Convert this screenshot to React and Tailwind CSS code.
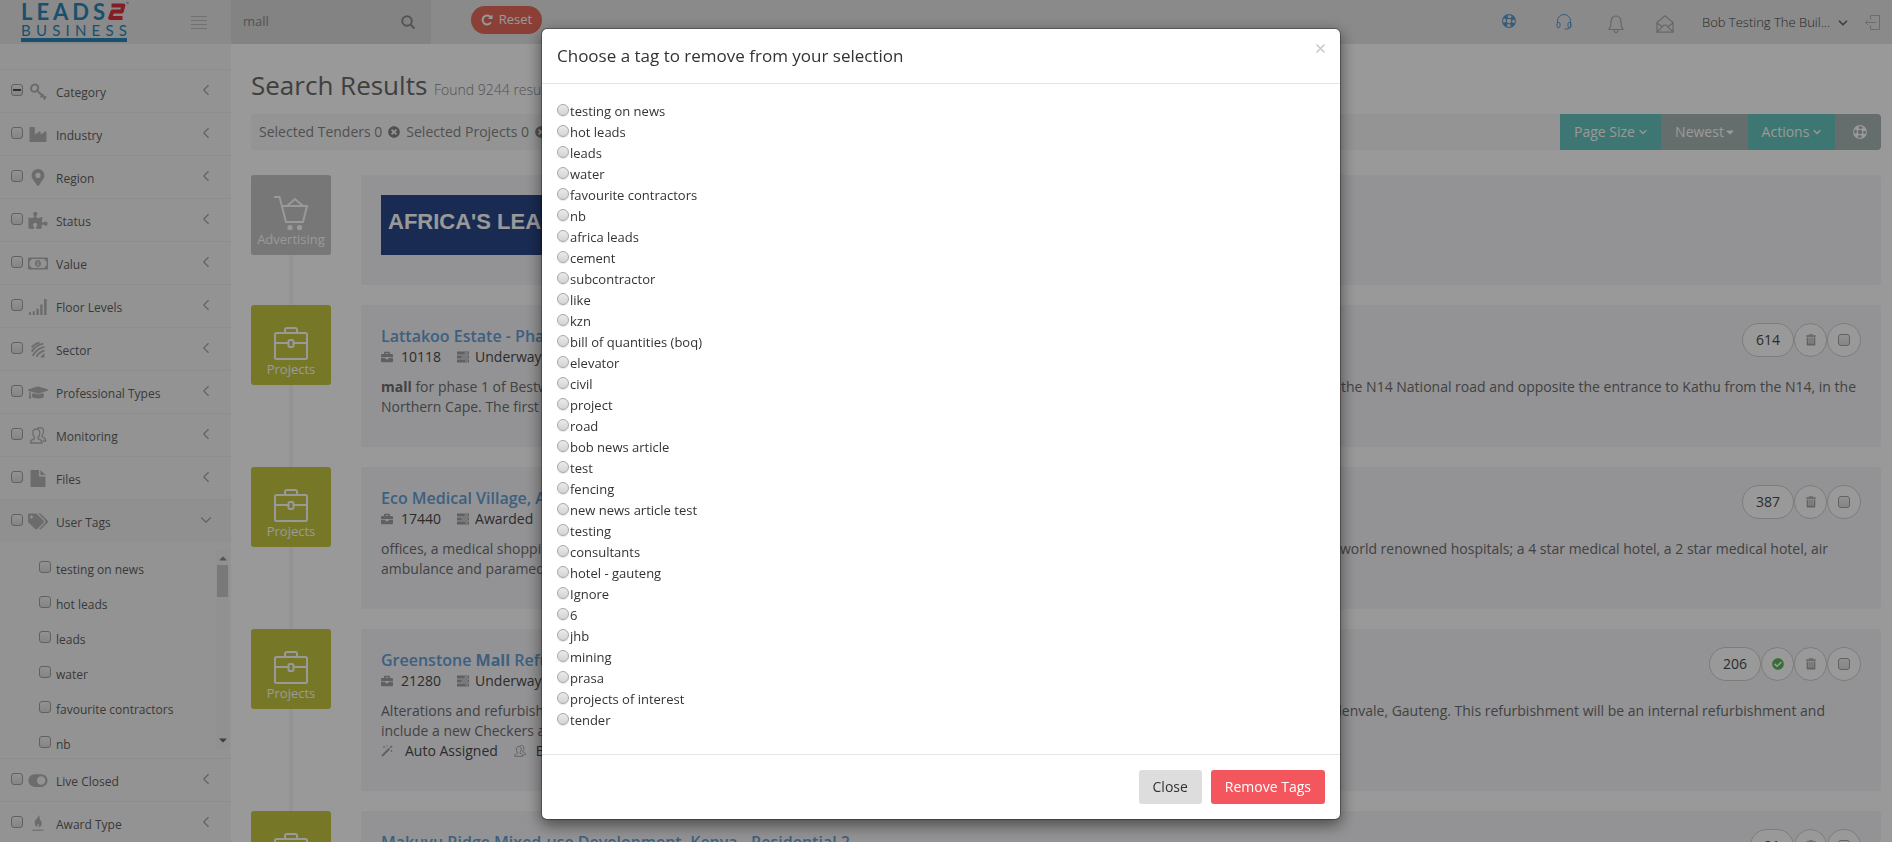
import React, { useState } from 'react';
import {
  FaIndustry, FaMapMarkerAlt, FaPuzzlePiece, FaRegMoneyBillAlt, FaGraduationCap,
  FaTags, FaToggleOn, FaTimesCircle, FaBriefcase, FaCaretDown, FaCheckCircle
} from 'react-icons/fa';
import { ChevronLeft, ChevronDown } from 'lucide-react';

// Icons that the icon sets lack
function KeyIcon({ className }) {
  return (
    <svg viewBox="0 0 16 16" className={className} fill="none" stroke="currentColor" strokeWidth="2">
      <ellipse cx="4.800" cy="4.800" rx="3.600" ry="3.200" transform="rotate(-40 4.800 4.800)" />
      <path d="M7.500 7.500L14.500 14M10.500 13.500L13 10.500M13.500 15.500L15.500 12.500" />
    </svg>
  );
}

function BarsIcon({ className }) {
  return (
    <svg viewBox="0 0 17 16" className={className} fill="currentColor">
      <path d="M0 13.500h2V16H0zM3.500 12.500h2V16h-2zM7 10h2.200v6H7zM10.600 6h2.200v10h-2.200zM14.200 1h2.400v15h-2.400z" />
    </svg>
  );
}

function FileIcon({ className }) {
  return (
    <svg viewBox="0 0 14 16" className={className} fill="currentColor">
      <path d="M0 0h8v6h6v10H0z" />
      <path d="M9.300 0L14 4.700H9.300z" />
    </svg>
  );
}

function FeedIcon({ className }) {
  return (
    <svg viewBox="0 0 16 16" className={className} fill="none" stroke="currentColor" strokeWidth="1.800">
      <path d="M2 6C4 3.500 6.500 2 9.500 1.500M2 10C4.500 6 8 3.500 13 2.500M3 14C5.500 9.500 9 6.500 14 5.500M6.500 15C8 12 10.500 10 14 9" />
      <path d="M10 15.500L14 11V15.500Z" fill="currentColor" stroke="none" />
    </svg>
  );
}

function UsersIcon({ className }) {
  return (
    <svg viewBox="0 0 17 17" className={className} fill="none" stroke="currentColor" strokeWidth="1.300">
      <path d="M1 16c0-3 1.500-3.300 4-4.200v-1.500C4 9.300 3.300 7.800 3.300 5.800 3.300 3.500 4.600 2 6.800 2s3.500 1.500 3.500 3.800c0 2-.7 3.500-1.700 4.500v1.500c2.500.9 4 1.200 4 4.200z" />
      <path d="M8 1.500C8.600.8 9.500.6 10.500.6c2.200 0 3.600 1.400 3.600 3.700 0 1.800-.6 3.300-1.600 4.300v1.200c2 .8 3.700 1.200 3.700 4.200h-2.700" />
    </svg>
  );
}

function AwardIcon({ className }) {
  return (
    <svg viewBox="0 0 16 18" className={className} fill="currentColor">
      <path d="M8.500 0c.3 3-4 4.500-4 8.500 0 2.500 1.500 4 3 4.600-.6-1.800 0-3 .8-4 .4 1.300 1 2.300.4 4C11 12.500 12 11 12 9c0-1.700-.8-2.500-1-4-.4.400-.6 1-.6 1.600C9.600 5 10.500 2 8.500 0z" />
      <rect x="2" y="15.500" width="12" height="1.200" />
    </svg>
  );
}

function LifeRing({ className }) {
  return (
    <svg viewBox="0 0 14 14" className={className} fill="none" stroke="currentColor">
      <circle cx="7" cy="7" r="6.400" strokeWidth="1.100" />
      <circle cx="7" cy="7" r="2.800" strokeWidth="1.100" />
      <circle cx="7" cy="7" r="4.600" strokeWidth="4" strokeDasharray="3.600 3.625" strokeDashoffset="-1.800" />
    </svg>
  );
}

function TasksIcon({ className }) {
  return (
    <svg viewBox="0 0 12 12" className={className} fill="currentColor">
      <path fillRule="evenodd" d="M0 .5h12v3H0zM7.500 1.500v1H11v-1zM0 4.500h12v3H0zM4.500 5.500v1H11v-1zM0 8.500h12v3H0zM8.500 9.500v1H11v-1z" />
    </svg>
  );
}

function WandIcon({ className }) {
  return (
    <svg viewBox="0 0 12 12" className={className} fill="none" stroke="currentColor">
      <path d="M1 11L8.500 3.500" strokeWidth="2" />
      <path d="M9.200 2.800L11 1" strokeWidth="1.600" />
      <path d="M3 1v2M2 2h2M6 .5v1.500M10.500 5v2M9.500 6h2" strokeWidth="0.700" />
    </svg>
  );
}

function BriefcaseOutline() {
  return (
    <svg viewBox="0 0 36 36" className="h-9 w-9" fill="none" stroke="currentColor" strokeWidth="2">
      <rect x="2" y="8" width="32" height="26" rx="1.500" />
      <path d="M12 8V5a2 2 0 0 1 2-2h8a2 2 0 0 1 2 2v3M2 18h13.500M20.500 18H34" />
      <rect x="15.500" y="15" width="5" height="7" rx="1.500" />
    </svg>
  );
}

function CartOutline() {
  return (
    <svg viewBox="0 0 36 36" className="h-9 w-9" fill="none" stroke="currentColor" strokeWidth="2">
      <path d="M1 2h5.500l6.500 25h17l4-16H9.500" />
      <path d="M14 11l8-7 8 7" />
      <circle cx="17" cy="32.500" r="2.600" fill="currentColor" stroke="none" />
      <circle cx="26.500" cy="32.500" r="2.600" fill="currentColor" stroke="none" />
    </svg>
  );
}

function TrashIcon() {
  return (
    <svg viewBox="0 0 12 14" className="h-3 w-3 text-[#a5a5a5]" fill="none" stroke="currentColor">
      <path d="M4 2V.8h4V2" />
      <rect x="0.500" y="1.500" width="11" height="1.800" fill="currentColor" stroke="none" />
      <path d="M2 4v8.500h8V4" strokeWidth="2" />
      <path d="M4.800 4v8M7.200 4v8" strokeWidth="1.300" />
    </svg>
  );
}

const filters = [
  { name: 'Category', icon: KeyIcon, partial: true },
  { name: 'Industry', icon: FaIndustry },
  { name: 'Region', icon: FaMapMarkerAlt },
  { name: 'Status', icon: FaPuzzlePiece },
  { name: 'Value', icon: FaRegMoneyBillAlt },
  { name: 'Floor Levels', icon: BarsIcon },
  { name: 'Sector', icon: FeedIcon },
  { name: 'Professional Types', icon: FaGraduationCap },
  { name: 'Monitoring', icon: UsersIcon },
  { name: 'Files', icon: FileIcon },
  { name: 'User Tags', icon: FaTags, open: true },
  { name: 'Live Closed', icon: FaToggleOn },
  { name: 'Award Type', icon: AwardIcon }
];

const tags = [
  'testing on news', 'hot leads', 'leads', 'water', 'favourite contractors', 'nb', 'africa leads',
  'cement', 'subcontractor', 'like', 'kzn', 'bill of quantities (boq)', 'elevator', 'civil',
  'project', 'road', 'bob news article', 'test', 'fencing', 'new news article test', 'testing',
  'consultants', 'hotel - gauteng', 'Ignore', '6', 'jhb', 'mining', 'prasa',
  'projects of interest', 'tender'
];

const projects = [
  {
    id: '10118',
    title: 'Lattakoo Estate - Phase 1',
    status: 'Underway',
    count: 614,
    lines: [
      [<><b className="font-bold">mall</b> for phase 1 of Bestwood</>, 'the N14 National road and opposite the entrance to Kathu from the N14, in the', 'mr-[5px]'],
      ['Northern Cape. The first phase', '', '']
    ]
  },
  {
    id: '17440',
    title: 'Eco Medical Village, A',
    status: 'Awarded',
    count: 387,
    lines: [
      ['offices, a medical shopping', 'world renowned hospitals; a 4 star medical hotel, a 2 star medical hotel, air', 'mr-[33px]'],
      ['ambulance and paramedic', '', '']
    ]
  },
  {
    id: '21280',
    title: <>Greenstone <b className="font-bold">Mall</b> Refurb</>,
    status: 'Underway',
    count: 206,
    checked: true,
    assigned: true,
    lines: [
      ['Alterations and refurbishment', 'Edenvale, Gauteng. This refurbishment will be an internal refurbishment and', 'mr-9'],
      ['include a new Checkers and', '', '']
    ]
  },
  {
    id: '24410',
    title: 'Makuyu Ridge Mixed-use Development, Kenya - Residential 2',
    status: 'Underway',
    count: 21,
    lines: []
  }
];

const boxClass =
  'h-3 w-3 shrink-0 appearance-none rounded-[3px] border border-[#a2a2a2] bg-linear-to-b from-[#f4f4f4] to-[#dedede]';

function Logo() {
  return (
    <a href="#home" aria-label="Leads 2 Business" className="mb-px ml-[21px] block w-[108px] font-['Lato',sans-serif] text-[#2b86b8]">
      <div className="flex h-[22px]">
        <div className="flex w-[84px] justify-between text-[22px] leading-[22px] font-bold">
          {'LEADS'.split('').map((letter) => <span key={letter}>{letter}</span>)}
        </div>
        <svg viewBox="0 0 24 22" className="h-[22px] w-6">
          <path d="M6.500 4.500H18.500L16.800 10.500H7.500L5 17H17.500" fill="none" stroke="#e0303c" strokeWidth="3.800" strokeLinejoin="round" />
          <circle cx="22.500" cy="2" r="0.900" fill="none" stroke="currentColor" strokeWidth="0.500" />
        </svg>
      </div>
      <div className="flex w-[106px] justify-between text-[15px] leading-[14px]">
        {'BUSINESS'.split('').map((letter, index) => <span key={index}>{letter}</span>)}
      </div>
      <div className="mt-px h-1 w-[106px] bg-[#2b86b8]" />
    </a>
  );
}

function TopBar() {
  const [query, setQuery] = useState('mall');

  return (
    <header className="flex h-11 bg-[#e6e6e6]">
      <div className="flex w-[231px] shrink-0 items-center justify-between pr-6">
        <Logo />
        <button aria-label="Toggle menu" className="flex w-4 flex-col gap-[3px]">
          <span className="h-px bg-[#bdbdbd]" />
          <span className="h-px bg-[#bdbdbd]" />
          <span className="h-px bg-[#bdbdbd]" />
          <span className="h-px bg-[#bdbdbd]" />
        </button>
      </div>
      <form className="flex w-[200px] items-center bg-[#dadada] pr-4 pl-3">
        <input
          aria-label="Search"
          value={query}
          onChange={(e) => setQuery(e.target.value)}
          className="min-w-0 flex-1 text-[13px] text-[#8a8a8a] outline-none"
        />
        <button type="button" aria-label="Search" className="text-[#8c8c8c]">
          <svg viewBox="0 0 14 14" className="h-3.5 w-3.5" fill="none" stroke="currentColor" strokeWidth="2">
            <circle cx="6" cy="6" r="4.800" />
            <path d="M9.500 9.500L13.500 13.500" />
          </svg>
        </button>
      </form>
      <button className="mt-1.5 ml-10 flex h-7 w-[71px] items-center justify-center gap-1.5 rounded-full bg-[#e66b5b] text-[13px] text-white">
        <svg viewBox="0 0 12 12" className="h-3 w-3" fill="none" stroke="currentColor" strokeWidth="2">
          <path d="M9.800 8.500A4.500 4.500 0 1 1 9.500 3" />
          <path d="M11.500 0.500V5H7Z" fill="currentColor" stroke="none" />
        </svg>
        Reset
      </button>
      <div className="ml-auto flex items-center pr-3">
        <LifeRing className="mr-10 mb-0.5 h-3.5 w-3.5 text-[#5c9bd1]" />
        <svg viewBox="0 0 16 16" className="mr-9 h-4 w-4 text-[#5c9bd1]" fill="none" stroke="currentColor">
          <path d="M1.500 9V7a6.500 6.500 0 0 1 13 0v5c0 2-1.500 3-4 3H8.500" />
          <rect x="1" y="8.500" width="3" height="5" rx="1" />
          <rect x="12" y="8.500" width="3" height="5" rx="1" />
        </svg>
        <svg viewBox="0 0 16 18" className="mt-1 mr-8 h-[18px] w-4 text-[#ababab]" fill="none" stroke="currentColor" strokeWidth="1.200">
          <path d="M1 14.500C3 12 3 10 3 7c0-4 2-6 5-6s5 2 5 6c0 3 0 5 2 7.500z" />
          <path d="M6 15c0 1.500.8 2.500 2 2.500s2-1 2-2.500" />
        </svg>
        <svg viewBox="0 0 18 18" className="mt-1 mr-7 h-[18px] w-[18px] text-[#ababab]" fill="none" stroke="currentColor" strokeWidth="1.200">
          <path d="M1 7.500L9 .8l8 6.700v9.700H1z" />
          <path d="M1 8l5 3.500M17 8l-5 3.500M1 17l7-7h2l7 7" />
        </svg>
        <a href="#account" className="mt-0.5 mr-[15px] flex items-center gap-1.5 text-[13px] font-light text-[#444]">
          Bob Testing The Buil...
          <ChevronDown className="h-3.5 w-3.5 text-[#6a6a6a]" strokeWidth={3} />
        </a>
        <button aria-label="Log out" className="text-[#b4b4b4]">
          <svg viewBox="0 0 15 15" className="h-[15px] w-[15px]" fill="none" stroke="currentColor">
            <path d="M5.500 4.500v-4h9v14h-9v-4M10.500 7.500h-10M3 5L.5 7.500L3 10" />
          </svg>
        </button>
      </div>
    </header>
  );
}

function Sidebar() {
  return (
    <aside className="w-[231px] shrink-0 bg-[#f6f6f6] pt-[25px]">
      {filters.map((filter) => {
        const Icon = filter.icon;
        const Arrow = filter.open ? ChevronDown : ChevronLeft;

        return (
          <div key={filter.name} className="border-t border-[#ebebeb]">
            <div className={`flex h-[42px] items-center pr-4 pl-[11px] ${filter.open ? 'bg-[#f0f0f0]' : ''}`}>
              <div className="relative mb-0.5 flex">
                <input type="checkbox" aria-label={`Select ${filter.name}`} className={boxClass} />
                {filter.partial && <span className="pointer-events-none absolute top-[5px] left-0.5 h-0.5 w-2 bg-[#505050]" />}
              </div>
              <Icon className="ml-[5px] h-[17px] w-5 text-[#b4b4b4]" />
              <a href="#filter" className="mt-1 ml-2 flex-1 text-xs text-[#5f5f5f]">{filter.name}</a>
              <Arrow className="mb-0.5 h-[18px] w-[18px] text-[#a2a2a2]" strokeWidth={1.5} />
            </div>
            {filter.open && (
              <div className="flex h-[216px] items-start">
                <ul className="h-[208px] flex-1 overflow-hidden pt-2 pl-[39px]">
                  {tags.slice(0, 6).map((tag) => (
                    <li key={tag} className="flex h-[35px] items-center">
                      <label className="flex items-center gap-[5px] text-xs text-[#5f5f5f]">
                        <input type="checkbox" className={`${boxClass} mb-0.5`} />
                        <span className="mt-1">{tag}</span>
                      </label>
                    </li>
                  ))}
                </ul>
                <div className="mt-2 mr-0.5 flex h-[200px] w-[13px] flex-col items-center bg-[#f2f2f2] pt-[3px] pb-1 text-[#6a6a6a]">
                  <FaCaretDown className="h-3 w-3 rotate-180 text-[#8a8a8a]" />
                  <div className="h-8 w-[11px] bg-[#cacaca]" />
                  <FaCaretDown className="mt-auto h-3 w-3" />
                </div>
              </div>
            )}
          </div>
        );
      })}
    </aside>
  );
}

function Tile({ ad }) {
  return (
    <div className={`relative mr-[30px] flex h-20 w-20 shrink-0 flex-col items-center justify-end rounded-[3px] pb-2 text-[13px] text-white ${ad ? 'bg-[#c6c6c6]' : 'bg-[#c5c843]'}`}>
      {ad ? <CartOutline /> : <BriefcaseOutline />}
      <span className="leading-4">{ad ? 'Advertising' : 'Projects'}</span>
    </div>
  );
}

function ProjectCard({ project }) {
  const circle = 'flex h-[34px] w-[33px] items-center justify-center rounded-full border border-[#cfcfcf] bg-white';

  return (
    <div className="flex">
      <Tile />
      <article className={`relative min-w-0 flex-1 rounded-[3px] bg-[#f5f5f8] p-5 text-sm leading-5 text-[#6e6e6e] ${project.assigned ? 'h-[162px]' : 'h-[142px]'}`}>
        <h2 className="text-base leading-[22px] font-semibold">
          <a href="#project" className="text-[#66a0d4]">{project.title}</a>
        </h2>
        <div className="flex items-center text-[#4a4a4a]">
          <FaBriefcase className="mr-2 h-3 w-3 text-[#a0a0a0]" />
          {project.id}
          <TasksIcon className="mr-1.5 ml-4 h-3 w-3 text-[#a0a0a0]" />
          {project.status}
        </div>
        <div className="mt-2.5">
          {project.lines.map(([start, end, space], index) => (
            <p key={index} className="flex justify-between whitespace-nowrap">
              <span>{start}</span>
              <span className={space}>{end}</span>
            </p>
          ))}
        </div>
        {project.assigned && (
          <div className="flex items-center text-[#4a4a4a]">
            <WandIcon className="mr-3 h-3 w-3 text-[#a0a0a0]" />
            Auto Assigned
            <UsersIcon className="mr-2.5 ml-4 h-3 w-3 text-[#a0a0a0]" />
            Bob
          </div>
        )}
        <div className="absolute top-[18px] right-5 flex">
          <span className="flex h-[34px] items-center rounded-full border border-[#cfcfcf] bg-white px-[13px] text-[#4a4a4a]">{project.count}</span>
          {project.checked && (
            <span className={circle}><FaCheckCircle className="h-3 w-3 text-[#5cb85c]" /></span>
          )}
          <button aria-label="Delete" className={circle}><TrashIcon /></button>
          <span className={`${circle} min-w-[34px]`}>
            <input type="checkbox" aria-label={`Select project ${project.id}`} className={boxClass} />
          </span>
        </div>
      </article>
    </div>
  );
}

function Results() {
  return (
    <main className="min-w-0 flex-1 overflow-hidden pr-[11px] pl-5">
      <h1 className="mt-[23px] text-[26px] leading-9 text-[#6a6a6a]">
        Search Results <small className="text-sm font-light text-[#8a8a8a]">Found 9244 results</small>
      </h1>
      <div className="mt-[11px] flex h-9 items-center rounded-[3px] bg-[#f7f7f7] pl-2 text-sm text-[#858585]">
        Selected Tenders 0 <FaTimesCircle className="mx-1.5 h-3 w-3" />
        Selected Projects 0 <FaTimesCircle className="mx-1.5 h-3 w-3" />
        <div className="ml-auto flex h-full text-white">
          <button className="flex w-[101px] items-center justify-center gap-0.5 bg-[#67c5be] pl-0.5">Page Size <ChevronDown className="h-3.5 w-3" strokeWidth={2.5} /></button>
          <button className="flex w-[87px] items-center justify-center bg-[#a9b7b5] pl-0.5">Newest <FaCaretDown className="h-3 w-3" /></button>
          <button className="flex w-[87px] items-center justify-center gap-0.5 bg-[#67c5be] pl-0.5">Actions <ChevronDown className="h-3.5 w-3" strokeWidth={2.5} /></button>
          <button aria-label="Help" className="flex w-[46px] items-center justify-center rounded-r bg-[#a9b7b5] pl-1"><LifeRing className="h-3.5 w-3.5" /></button>
        </div>
      </div>
      <div className="relative mt-[25px] flex flex-col gap-5">
        <div className="absolute inset-y-0 left-[38px] w-1 bg-[#f5f5f5]" />
        <div className="flex">
          <Tile ad />
          <div className="h-[110px] flex-1 rounded-[3px] bg-[#f5f5f8] p-5">
            <a href="#africa" className="flex h-[60px] w-[468px] items-center bg-[#2b4989] pb-1.5 pl-[7px] font-['Liberation_Sans',sans-serif] text-[22px] leading-7 font-bold whitespace-nowrap text-white">
              AFRICA'S LEADING
            </a>
          </div>
        </div>
        {projects.map((project) => (
          <ProjectCard key={project.id} project={project} />
        ))}
      </div>
    </main>
  );
}

function RemoveTagModal() {
  const [selected, setSelected] = useState('');

  return (
    <div className="fixed inset-0 flex items-start justify-center bg-black/40 pt-7 pr-2.5">
      <div role="dialog" aria-labelledby="modal-title" className="w-[800px] rounded-md border border-black/30 bg-white bg-clip-padding text-[#333] shadow-[0_5px_15px_rgba(0,0,0,0.5)]">
        <div className="flex h-[55px] items-start justify-between border-b border-[#e5e5e5] px-[15px] pt-[15px]">
          <h4 id="modal-title" className="text-[17px] leading-6">Choose a tag to remove from your selection</h4>
          <button aria-label="Close dialog" className="text-[#c8c8c8]">
            <svg viewBox="0 0 9 9" className="h-[9px] w-[9px]" fill="none" stroke="currentColor" strokeWidth="1.500">
              <path d="M0.500 0.500l8 8M8.500 0.500l-8 8" />
            </svg>
          </button>
        </div>
        <div className="px-[15px] pt-[17px] pb-[23px]">
          {tags.map((tag) => (
            <label key={tag} className="flex h-[21px] items-center text-[13px]">
              <input
                type="radio"
                name="tag"
                checked={selected === tag}
                onChange={() => setSelected(tag)}
                className="mr-px mb-1 h-3 w-3 appearance-none rounded-full border border-[#a8a8a8] bg-linear-to-b from-[#eaeaea] to-[#d4d4d4] shadow-[0_1px_1px_rgba(0,0,0,0.1)]"
              />
              {tag}
            </label>
          ))}
        </div>
        <div className="flex justify-end gap-[9px] border-t border-[#e5e5e5] p-[15px] text-sm">
          <button className="h-[34px] rounded-[3px] bg-[#ddd] px-3.5">Close</button>
          <button className="h-[34px] rounded-[3px] bg-[#f3565d] px-3.5 text-white">Remove Tags</button>
        </div>
      </div>
    </div>
  );
}

function App() {
  return (
    <div className="h-screen overflow-hidden bg-white font-['Open_Sans',sans-serif]">
      <TopBar />
      <div className="flex">
        <Sidebar />
        <Results />
      </div>
      <RemoveTagModal />
    </div>
  );
}

export default App;
